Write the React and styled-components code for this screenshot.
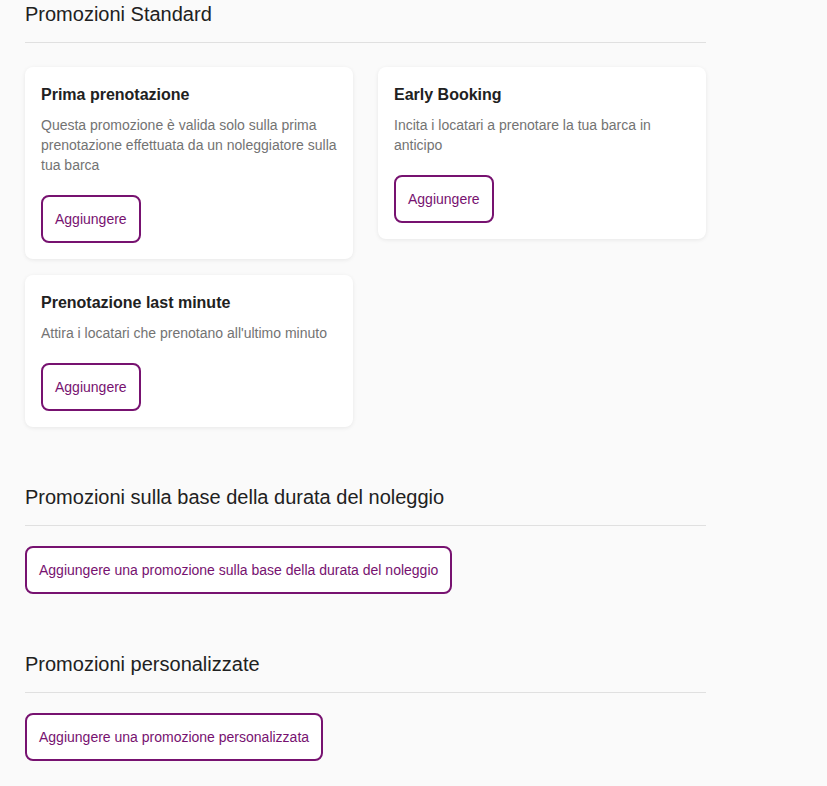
import React from "react";
import styled, { createGlobalStyle } from "styled-components";

const standardPromos = [
  {
    title: "Prima prenotazione",
    text: "Questa promozione è valida solo sulla prima prenotazione effettuata da un noleggiatore sulla tua barca",
  },
  {
    title: "Early Booking",
    text: "Incita i locatari a prenotare la tua barca in anticipo",
  },
  {
    title: "Prenotazione last minute",
    text: "Attira i locatari che prenotano all'ultimo minuto",
  },
];

function App() {
  return (
    <Page>
      <GlobalStyle />
      <Content>
        <Section>
          <SectionTitle>Promozioni Standard</SectionTitle>
          <CardGrid>
            {standardPromos.map((promo) => (
              <Card key={promo.title}>
                <CardTitle>{promo.title}</CardTitle>
                <CardText>{promo.text}</CardText>
                <OutlineButton>Aggiungere</OutlineButton>
              </Card>
            ))}
          </CardGrid>
        </Section>

        <Section>
          <SectionTitle>Promozioni sulla base della durata del noleggio</SectionTitle>
          <ButtonRow>
            <OutlineButton>
              Aggiungere una promozione sulla base della durata del noleggio
            </OutlineButton>
          </ButtonRow>
        </Section>

        <Section>
          <SectionTitle>Promozioni personalizzate</SectionTitle>
          <ButtonRow>
            <OutlineButton>Aggiungere una promozione personalizzata</OutlineButton>
          </ButtonRow>
        </Section>
      </Content>
    </Page>
  );
}

const GlobalStyle = createGlobalStyle`
  body {
    margin: 0;
    background: #fafafa;
    font-family: "Liberation Sans", Arial, sans-serif;
  }
`;

const Page = styled.div`
  min-height: 786px;
  background: #fafafa;
`;

const Content = styled.div`
  width: 681px;
  padding-left: 25px;
`;

const Section = styled.section`
  margin-bottom: 56px;
`;

const SectionTitle = styled.h2`
  margin: 0;
  padding-bottom: 14px;
  border-bottom: 1px solid #e0e0e0;
  font-size: 20px;
  line-height: 28px;
  font-weight: 400;
  color: #212121;
`;

const CardGrid = styled.div`
  display: grid;
  grid-template-columns: 1fr 1fr;
  column-gap: 25px;
  row-gap: 16px;
  align-items: start;
  margin-top: 24px;
`;

const Card = styled.div`
  background: #fff;
  border-radius: 8px;
  padding: 16px;
  box-shadow: 0 1px 4px rgba(0, 0, 0, 0.08);
`;

const CardTitle = styled.h3`
  margin: 0 0 8px;
  font-size: 16px;
  line-height: 24px;
  font-weight: 700;
  color: #212121;
`;

const CardText = styled.p`
  margin: 0 0 20px;
  font-size: 14px;
  line-height: 20px;
  color: #737373;
`;

const ButtonRow = styled.div`
  margin-top: 20px;
`;

const OutlineButton = styled.button`
  height: 48px;
  padding: 0 12px;
  border: 2px solid #771270;
  border-radius: 8px;
  background: #fff;
  color: #771270;
  font-family: "Liberation Sans", Arial, sans-serif;
  font-size: 14px;
  cursor: pointer;
`;

export default App;
